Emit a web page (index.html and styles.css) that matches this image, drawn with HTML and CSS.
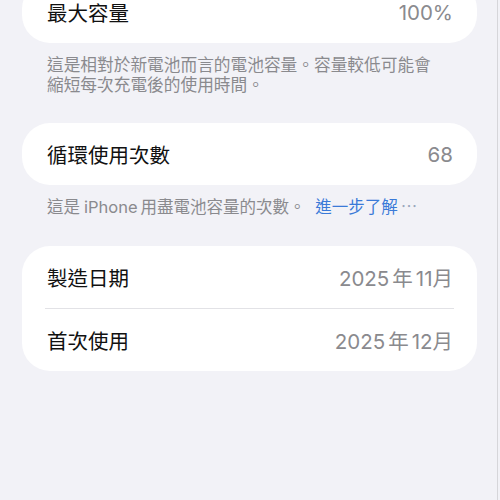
FILE: index.html
```html
<!DOCTYPE html>
<html lang="zh-Hant">
<head>
<meta charset="utf-8">
<link rel="stylesheet" href="styles.css">
</head>
<body>
<div class="page">
  <div class="card first">
    <div class="row">
      <span class="label">最大容量</span>
      <span class="value">100%</span>
    </div>
  </div>
  <p class="footer wrap">這是相對於新電池而言的電池容量。容量較低可能會縮短每次充電後的使用時間。</p>

  <div class="card">
    <div class="row">
      <span class="label">循環使用次數</span>
      <span class="value">68</span>
    </div>
  </div>
  <p class="footer">這是<span class="lat">iPhone</span>用盡電池容量的次數。 <span class="link">進一步了解</span><span class="dots">…</span></p>

  <div class="card">
    <div class="row">
      <span class="label">製造日期</span>
      <span class="value">2025<span class="g">年</span>11月</span>
    </div>
    <div class="sep"></div>
    <div class="row">
      <span class="label">首次使用</span>
      <span class="value">2025<span class="g">年</span>12月</span>
    </div>
  </div>
</div>
</body>
</html>
```

FILE: styles.css
```css
html, body {
  margin: 0;
  padding: 0;
  background: #f2f2f7;
  overflow: hidden;
}
body {
  width: 500px;
  height: 500px;
  font-family: "Inter", "Noto Sans CJK TC", sans-serif;
}
.page {
  width: 498px;
  height: 500px;
  border-right: 1px solid #d6d6da;
  padding: 0 20px 0 22px;
  box-sizing: border-box;
  display: flex;
  flex-direction: column;
}
.card {
  background: #ffffff;
  border-radius: 28px;
  display: flex;
  flex-direction: column;
}
.card.first {
  margin-top: -19px;
}
.row {
  height: 62px;
  display: flex;
  align-items: center;
  justify-content: space-between;
  padding: 0 24px 0 25px;
}
.label {
  font-size: 20.5px;
  color: #111111;
  font-family: "Noto Sans CJK TC", sans-serif;
}
.value {
  font-size: 20.5px;
  color: #8a8a8e;
  font-family: "Inter", "Noto Sans CJK TC", sans-serif;
}
.value .g {
  margin: 0 3px 0 3px;
  font-family: "Noto Sans CJK TC", sans-serif;
}
.sep {
  height: 1px;
  background: #e2e2e6;
  margin: 0 23px;
}
.footer {
  margin: 11px 0 29px;
  padding: 0 25px;
  font-size: 16.5px;
  line-height: 20px;
  color: #8a8a8e;
  font-family: "Noto Sans CJK TC", sans-serif;
}
.footer.wrap {
  font-size: 16.7px;
  padding-right: 40px;
}
.footer .lat {
  font-family: "Inter", sans-serif;
  margin: 0 3px 0 4px;
}
.link {
  color: #3a7ad8;
  margin-left: 6px;
}
.dots {
  color: #9aa7bd;
  margin-left: 3px;
}
```
